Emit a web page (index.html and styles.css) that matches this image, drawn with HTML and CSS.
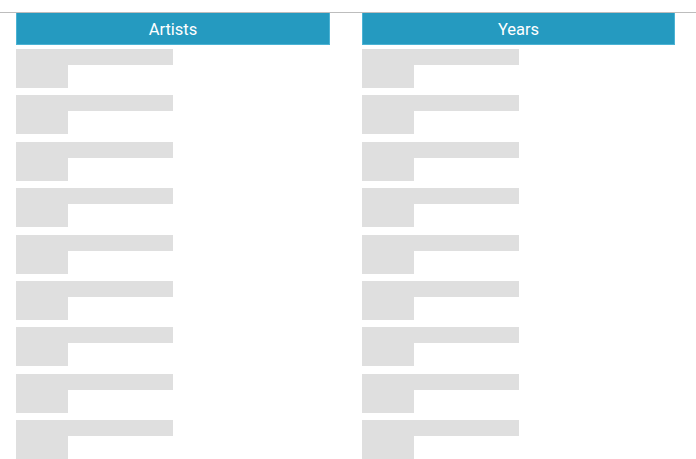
FILE: index.html
```html
<!DOCTYPE html>
<html>
<head>
<meta charset="utf-8">
<link rel="stylesheet" href="styles.css">
</head>
<body>
<div class="page">
  <div class="columns">
    <section class="col col-left">
      <div class="col-head">Artists</div>
      <div class="list">
        <div class="item"><div class="bar"></div><div class="block"></div></div>
        <div class="item"><div class="bar"></div><div class="block"></div></div>
        <div class="item"><div class="bar"></div><div class="block"></div></div>
        <div class="item"><div class="bar"></div><div class="block"></div></div>
        <div class="item"><div class="bar"></div><div class="block"></div></div>
        <div class="item"><div class="bar"></div><div class="block"></div></div>
        <div class="item"><div class="bar"></div><div class="block"></div></div>
        <div class="item"><div class="bar"></div><div class="block"></div></div>
        <div class="item"><div class="bar"></div><div class="block"></div></div>
      </div>
    </section>
    <section class="col col-right">
      <div class="col-head">Years</div>
      <div class="list">
        <div class="item"><div class="bar"></div><div class="block"></div></div>
        <div class="item"><div class="bar"></div><div class="block"></div></div>
        <div class="item"><div class="bar"></div><div class="block"></div></div>
        <div class="item"><div class="bar"></div><div class="block"></div></div>
        <div class="item"><div class="bar"></div><div class="block"></div></div>
        <div class="item"><div class="bar"></div><div class="block"></div></div>
        <div class="item"><div class="bar"></div><div class="block"></div></div>
        <div class="item"><div class="bar"></div><div class="block"></div></div>
        <div class="item"><div class="bar"></div><div class="block"></div></div>
      </div>
    </section>
  </div>
</div>
</body>
</html>
```
FILE: styles.css
```css
html, body {
  margin: 0;
  padding: 0;
  background: #ffffff;
  font-family: Roboto, "Liberation Sans", sans-serif;
  overflow: hidden;
}
.page {
  padding-top: 12px;
}
.columns {
  border-top: 1px solid #bdbdbd;
  display: flex;
  gap: 32px;
  padding-left: 16px;
}
.col-left { width: 314px; }
.col-right { width: 313px; }
.col-head {
  box-sizing: border-box;
  height: 32px;
  background: #259ac0;
  border: 1px solid #4cb3d4;
  border-top: none;
  color: #ffffff;
  font-size: 16.5px;
  line-height: 33px;
  text-align: center;
}
.list {
  display: flex;
  flex-direction: column;
  gap: 7.375px;
  padding-top: 4px;
}
.item {
  display: flex;
  flex-direction: column;
  height: 39px;
}
.bar {
  width: 157px;
  height: 16px;
  background: #dfdfdf;
}
.block {
  width: 52px;
  height: 23px;
  background: #dfdfdf;
}
```
